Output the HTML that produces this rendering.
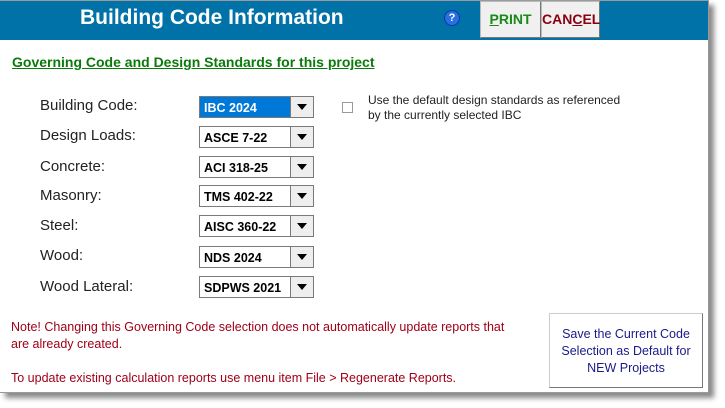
<!DOCTYPE html>
<html><head><meta charset="utf-8"><style>
body{margin:0;width:725px;height:408px;background:#fff;position:relative;overflow:hidden;font-family:"Segoe UI","Liberation Sans",sans-serif}
.win{position:absolute;left:0;top:0;width:708px;height:391px;border:1px solid #9a9a9a;border-left:none;background:#fff;box-shadow:5px 5px 5px #8a8a8a}
.hdr{position:absolute;left:0;top:0;width:708px;height:39px;background:#0072a8}
.title{position:absolute;left:80px;top:5px;color:#fff;font-weight:bold;font-size:21px}
.q{position:absolute;left:444px;top:9px;width:14px;height:14px;border-radius:50%;background:#2a6fe0;border:1px solid #0a3aa0;color:#fff;font-size:11px;font-weight:bold;text-align:center;line-height:14px}
.btn{position:absolute;top:0;height:35px;background:#f0f0f0;border:1px solid #bbb;border-right-color:#777;border-bottom-color:#777;font-weight:bold;font-size:14px;text-align:center;line-height:35px}
.h2{position:absolute;left:12px;top:53px;color:#0a7a0a;font-weight:bold;font-size:14px;text-decoration:underline}
.lbl{position:absolute;left:40px;font-size:15px;color:#222}
.dd{position:absolute;left:199px;width:115px;height:22px;border:1px solid #7a7a7a;background:#fff;font-weight:bold;font-size:12.5px;line-height:22px;box-sizing:border-box}
.dd span{position:absolute;left:4px;top:0}
.dd.sel{background:#0078d7;color:#fff}
.dd i{position:absolute;right:0;top:0;width:22px;height:20px;background:#eee;border-left:1px solid #7a7a7a}
.dd i:after{content:"";position:absolute;left:6px;top:7px;border-left:5px solid transparent;border-right:5px solid transparent;border-top:6px solid #000}
.note{position:absolute;left:11px;color:#a00018;font-size:12.5px;line-height:17px}
.save{position:absolute;left:549px;top:312px;width:154px;height:75px;box-sizing:border-box;border:1px solid #ccc;border-right-color:#777;border-bottom-color:#777;background:#fff;color:#1a1a8a;font-size:12.5px;text-align:center;line-height:17px;padding-top:12px}
</style></head><body>
<div class="win">
<div class="hdr">
<div class="title">Building Code Information</div>
<div class="q">?</div>
<div class="btn" style="left:480px;width:59px;color:#1a8a1a"><u>P</u>RINT</div>
<div class="btn" style="left:541px;width:57px;color:#8a0010">CAN<u>C</u>EL</div>
</div>
<div class="h2">Governing Code and Design Standards for this project</div>
<div class="lbl" style="top:96px">Building Code:</div>
<div class="lbl" style="top:126px">Design Loads:</div>
<div class="lbl" style="top:157px">Concrete:</div>
<div class="lbl" style="top:186px">Masonry:</div>
<div class="lbl" style="top:216px">Steel:</div>
<div class="lbl" style="top:246px">Wood:</div>
<div class="lbl" style="top:277px">Wood Lateral:</div>
<div class="dd sel" style="top:95px"><span>IBC 2024</span><i></i></div>
<div class="dd" style="top:125px"><span>ASCE 7-22</span><i></i></div>
<div class="dd" style="top:155px"><span>ACI 318-25</span><i></i></div>
<div class="dd" style="top:184px"><span>TMS 402-22</span><i></i></div>
<div class="dd" style="top:214px"><span>AISC 360-22</span><i></i></div>
<div class="dd" style="top:245px"><span>NDS 2024</span><i></i></div>
<div class="dd" style="top:275px"><span>SDPWS 2021</span><i></i></div>
<div style="position:absolute;left:342px;top:101px;width:9px;height:9px;border:1px solid #999;background:#fff"></div>
<div style="position:absolute;left:368px;top:92px;font-family:'Liberation Sans',sans-serif;font-size:12px;line-height:15px;color:#222">Use the default design standards as referenced<br>by the currently selected IBC</div>
<div class="note" style="top:318px">Note! Changing this Governing Code selection does not automatically update reports that<br>are already created.</div>
<div class="note" style="top:369px">To update existing calculation reports use menu item File &gt; Regenerate Reports.</div>
<div class="save">Save the Current Code<br>Selection as Default for<br>NEW Projects</div>
</div>
</body></html>
